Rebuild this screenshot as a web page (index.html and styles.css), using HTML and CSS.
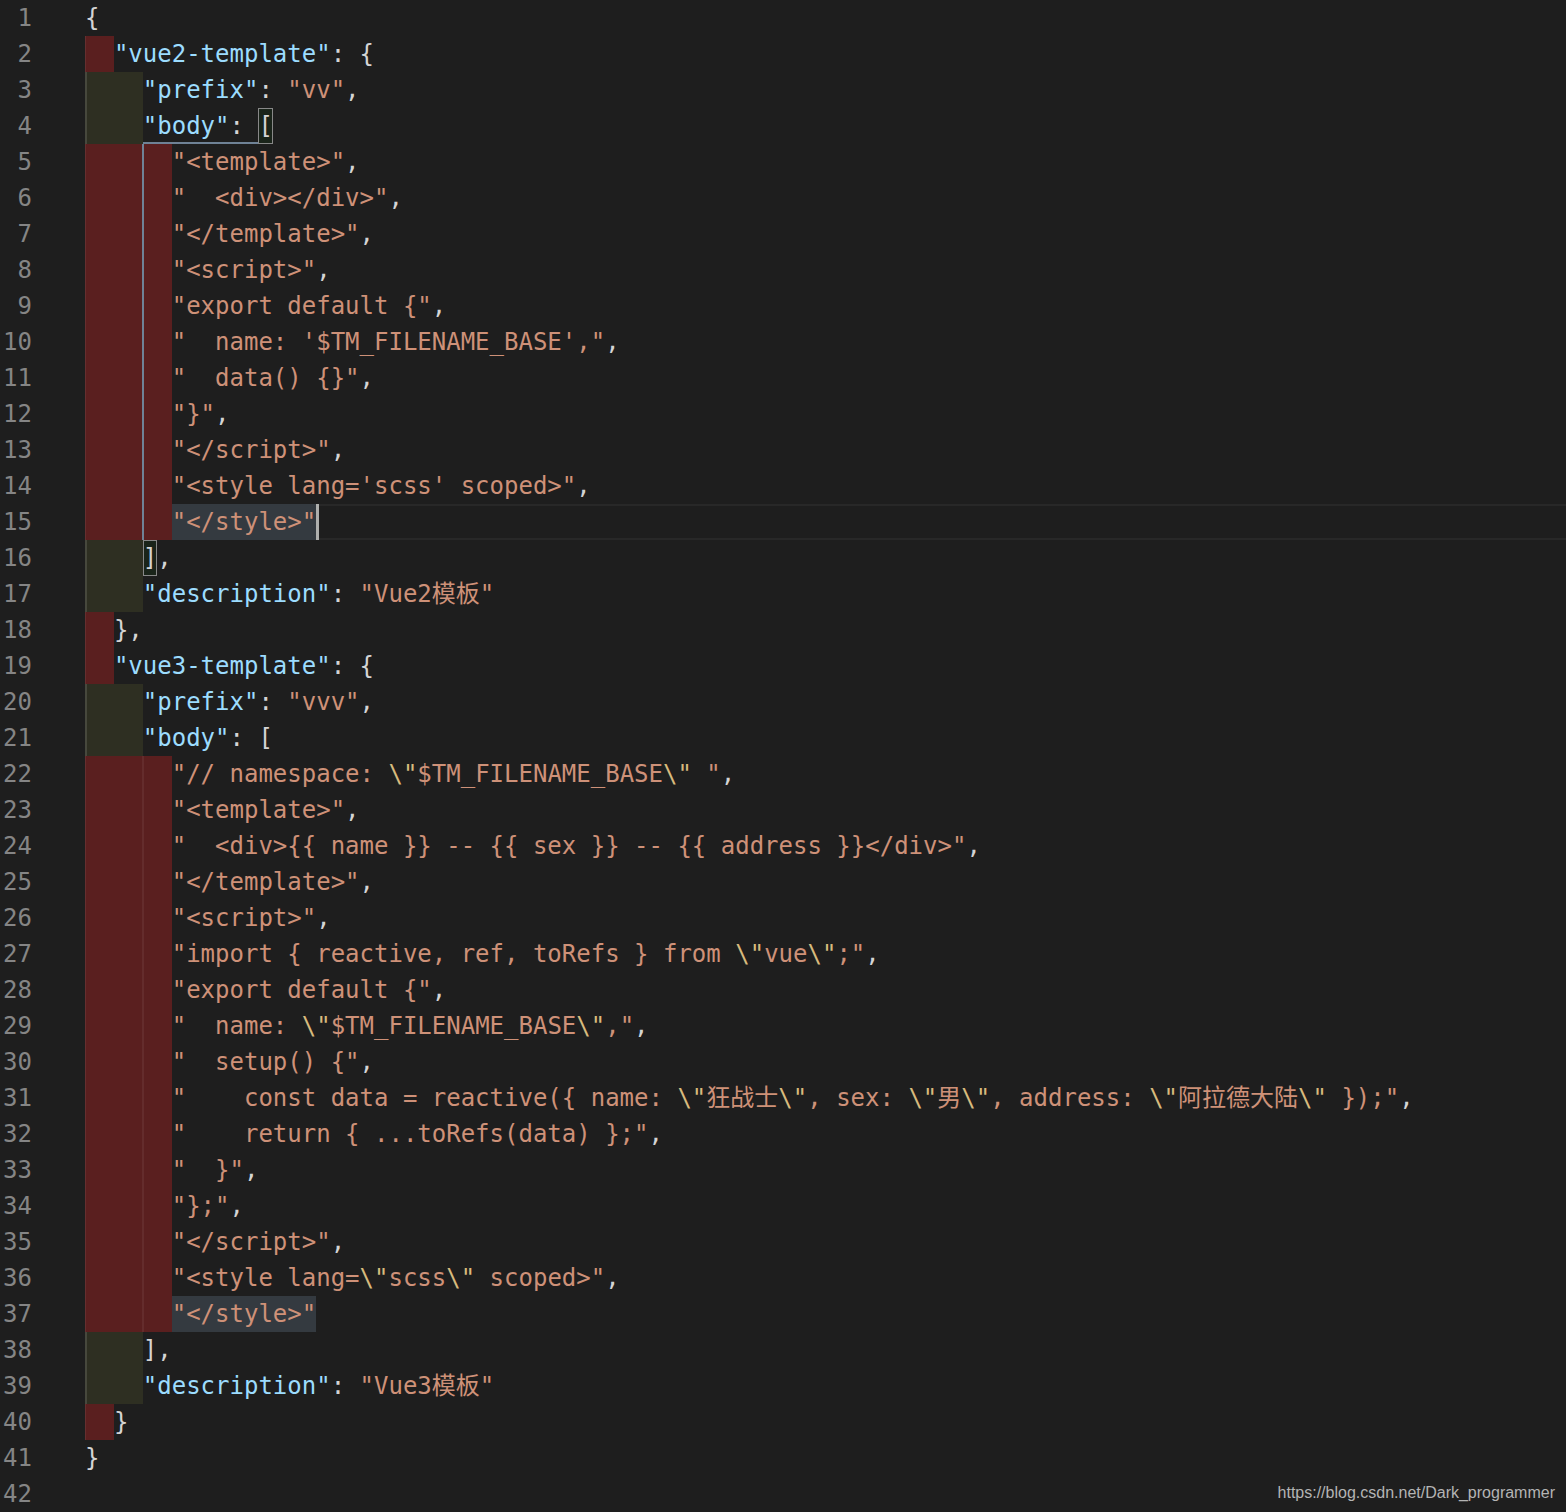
FILE: index.html
```html
<!DOCTYPE html>
<html lang="zh-CN">
<head>
<meta charset="utf-8">
<title>snippets.json</title>
<link rel="stylesheet" href="styles.css">
</head>
<body>
<div class="editor">
<div class="line"><span class="ln">1</span><span class="code">{</span></div>
<div class="line"><span class="ln">2</span><span class="code"><span class="ind r2"></span><span class="k">"vue2-template"</span>: {</span></div>
<div class="line"><span class="ln">3</span><span class="code"><span class="ind o4"></span><span class="k">"prefix"</span>: <span class="s">"vv"</span>,</span></div>
<div class="line"><span class="ln">4</span><span class="code"><span class="ind o4"></span><span class="hg"><span class="k">"body"</span>: </span><span class="bm">[</span></span></div>
<div class="line"><span class="ln">5</span><span class="code"><span class="ind r6 act"></span><span class="s">"&lt;template&gt;"</span>,</span></div>
<div class="line"><span class="ln">6</span><span class="code"><span class="ind r6 act"></span><span class="s">"  &lt;div&gt;&lt;/div&gt;"</span>,</span></div>
<div class="line"><span class="ln">7</span><span class="code"><span class="ind r6 act"></span><span class="s">"&lt;/template&gt;"</span>,</span></div>
<div class="line"><span class="ln">8</span><span class="code"><span class="ind r6 act"></span><span class="s">"&lt;script&gt;"</span>,</span></div>
<div class="line"><span class="ln">9</span><span class="code"><span class="ind r6 act"></span><span class="s">"export default {"</span>,</span></div>
<div class="line"><span class="ln">10</span><span class="code"><span class="ind r6 act"></span><span class="s">"  name: '$TM_FILENAME_BASE',"</span>,</span></div>
<div class="line"><span class="ln">11</span><span class="code"><span class="ind r6 act"></span><span class="s">"  data() {}"</span>,</span></div>
<div class="line"><span class="ln">12</span><span class="code"><span class="ind r6 act"></span><span class="s">"}"</span>,</span></div>
<div class="line"><span class="ln">13</span><span class="code"><span class="ind r6 act"></span><span class="s">"&lt;/script&gt;"</span>,</span></div>
<div class="line"><span class="ln">14</span><span class="code"><span class="ind r6 act"></span><span class="s">"&lt;style lang='scss' scoped&gt;"</span>,</span></div>
<div class="line"><span class="ln">15</span><span class="code cur"><span class="ind r6 act"></span><span class="s sel">"&lt;/style&gt;"</span><span class="caret"></span></span></div>
<div class="line"><span class="ln">16</span><span class="code"><span class="ind o4"></span><span class="bm">]</span>,</span></div>
<div class="line"><span class="ln">17</span><span class="code"><span class="ind o4"></span><span class="k">"description"</span>: <span class="s">"Vue2模板"</span></span></div>
<div class="line"><span class="ln">18</span><span class="code"><span class="ind r2"></span>},</span></div>
<div class="line"><span class="ln">19</span><span class="code"><span class="ind r2"></span><span class="k">"vue3-template"</span>: {</span></div>
<div class="line"><span class="ln">20</span><span class="code"><span class="ind o4"></span><span class="k">"prefix"</span>: <span class="s">"vvv"</span>,</span></div>
<div class="line"><span class="ln">21</span><span class="code"><span class="ind o4"></span><span class="k">"body"</span>: [</span></div>
<div class="line"><span class="ln">22</span><span class="code"><span class="ind r6"></span><span class="s">"// namespace: <span class="e">\"</span>$TM_FILENAME_BASE<span class="e">\"</span> "</span>,</span></div>
<div class="line"><span class="ln">23</span><span class="code"><span class="ind r6"></span><span class="s">"&lt;template&gt;"</span>,</span></div>
<div class="line"><span class="ln">24</span><span class="code"><span class="ind r6"></span><span class="s">"  &lt;div&gt;{{ name }} -- {{ sex }} -- {{ address }}&lt;/div&gt;"</span>,</span></div>
<div class="line"><span class="ln">25</span><span class="code"><span class="ind r6"></span><span class="s">"&lt;/template&gt;"</span>,</span></div>
<div class="line"><span class="ln">26</span><span class="code"><span class="ind r6"></span><span class="s">"&lt;script&gt;"</span>,</span></div>
<div class="line"><span class="ln">27</span><span class="code"><span class="ind r6"></span><span class="s">"import { reactive, ref, toRefs } from <span class="e">\"</span>vue<span class="e">\"</span>;"</span>,</span></div>
<div class="line"><span class="ln">28</span><span class="code"><span class="ind r6"></span><span class="s">"export default {"</span>,</span></div>
<div class="line"><span class="ln">29</span><span class="code"><span class="ind r6"></span><span class="s">"  name: <span class="e">\"</span>$TM_FILENAME_BASE<span class="e">\"</span>,"</span>,</span></div>
<div class="line"><span class="ln">30</span><span class="code"><span class="ind r6"></span><span class="s">"  setup() {"</span>,</span></div>
<div class="line"><span class="ln">31</span><span class="code"><span class="ind r6"></span><span class="s">"    const data = reactive({ name: <span class="e">\"</span>狂战士<span class="e">\"</span>, sex: <span class="e">\"</span>男<span class="e">\"</span>, address: <span class="e">\"</span>阿拉德大陆<span class="e">\"</span> });"</span>,</span></div>
<div class="line"><span class="ln">32</span><span class="code"><span class="ind r6"></span><span class="s">"    return { ...toRefs(data) };"</span>,</span></div>
<div class="line"><span class="ln">33</span><span class="code"><span class="ind r6"></span><span class="s">"  }"</span>,</span></div>
<div class="line"><span class="ln">34</span><span class="code"><span class="ind r6"></span><span class="s">"};"</span>,</span></div>
<div class="line"><span class="ln">35</span><span class="code"><span class="ind r6"></span><span class="s">"&lt;/script&gt;"</span>,</span></div>
<div class="line"><span class="ln">36</span><span class="code"><span class="ind r6"></span><span class="s">"&lt;style lang=<span class="e">\"</span>scss<span class="e">\"</span> scoped&gt;"</span>,</span></div>
<div class="line"><span class="ln">37</span><span class="code"><span class="ind r6"></span><span class="s sel">"&lt;/style&gt;"</span></span></div>
<div class="line"><span class="ln">38</span><span class="code"><span class="ind o4"></span>],</span></div>
<div class="line"><span class="ln">39</span><span class="code"><span class="ind o4"></span><span class="k">"description"</span>: <span class="s">"Vue3模板"</span></span></div>
<div class="line"><span class="ln">40</span><span class="code"><span class="ind r2"></span>}</span></div>
<div class="line"><span class="ln">41</span><span class="code">}</span></div>
<div class="line"><span class="ln">42</span><span class="code"></span></div>
</div>
<div class="watermark">https://blog.csdn.net/Dark_programmer</div>
</body>
</html>
```
FILE: styles.css
```css
html, body {
  margin: 0;
  padding: 0;
  background: #1e1e1e;
}
body {
  width: 1566px;
  height: 1512px;
  overflow: hidden;
  position: relative;
}
.editor {
  font-family: "DejaVu Sans Mono", "Noto Sans CJK SC", monospace;
  font-size: 24px;
  line-height: 36px;
  color: #d4d4d4;
}
.line {
  display: flex;
  height: 36px;
}
.ln {
  width: 32px;
  flex: none;
  text-align: right;
  color: #858585;
}
.code {
  flex: 1;
  margin-left: 53px;
  white-space: pre;
  height: 36px;
}
.cur {
  box-shadow: inset 0 2px 0 #282828, inset 0 -2px 0 #282828;
}
.ind {
  display: inline-block;
  height: 36px;
  vertical-align: top;
}
.r2 {
  width: 2ch;
  background: linear-gradient(to right, rgba(255,255,255,0.07) 0 1px, transparent 1px) #5a1f1f;
}
.o4 {
  width: 4ch;
  background: linear-gradient(to right, rgba(255,255,255,0.12) 0 1.5px, transparent 1.5px) #2e2f22;
}
.r6 {
  width: 6ch;
  background:
    linear-gradient(to right, rgba(255,255,255,0.07) 0 1px, transparent 1px),
    linear-gradient(to right, transparent calc(4ch - 0.5px), rgba(255,255,255,0.06) calc(4ch - 0.5px) calc(4ch + 1px), transparent calc(4ch + 1px))
    #5a1f1f;
}
.r6.act {
  background:
    linear-gradient(to right, rgba(255,255,255,0.07) 0 1px, transparent 1px),
    linear-gradient(to right, transparent calc(4ch - 0.5px), #6f8296 calc(4ch - 0.5px) calc(4ch + 1px), transparent calc(4ch + 1px))
    #5a1f1f;
}
.k { color: #9cdcfe; }
.s { color: #ce9178; }
.e { color: #d7ba7d; }
.hg {
  display: inline-block;
  height: 36px;
  vertical-align: top;
  box-shadow: inset 0 -2px 0 #6f8296;
}
.bm {
  display: inline-block;
  height: 36px;
  vertical-align: top;
  background: rgba(0, 100, 0, 0.1);
  box-shadow: inset 0 0 0 1px #888888;
}
.sel {
  display: inline-block;
  height: 36px;
  vertical-align: top;
  background: #343a40;
}
.caret {
  display: inline-block;
  width: 3px;
  height: 36px;
  vertical-align: top;
  background: #aeafad;
}
.watermark {
  position: absolute;
  right: 11px;
  bottom: 9px;
  font-family: "Liberation Sans", Arial, sans-serif;
  font-size: 16px;
  line-height: 20px;
  color: #b4b4b4;
}
```
